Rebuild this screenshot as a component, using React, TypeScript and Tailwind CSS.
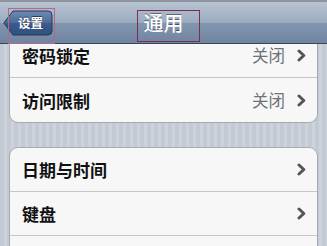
import React from "react";

const font = { fontFamily: '"Noto Sans CJK SC", "Noto Sans", sans-serif' };

function Chevron() {
  return (
    <svg width="9" height="13" viewBox="0 0 9 13" className="shrink-0">
      <path d="M2 2 L6.8 6.5 L2 11" fill="none" stroke="#555557" strokeWidth="3" strokeLinecap="round" strokeLinejoin="round" />
    </svg>
  );
}

function Row({ label, value, last }: { label: string; value?: string; last?: boolean }) {
  return (
    <div className={`flex h-[44px] items-center pl-[12px] pr-[11px] ${last ? "" : "border-b border-[#c4c6ca]"}`}>
      <span className="flex-1 text-[17px] font-bold text-[#111] leading-none">{label}</span>
      {value && <span className="mr-[12px] text-[16.5px] text-[#6f7278] leading-none">{value}</span>}
      <Chevron />
    </div>
  );
}

export default function App() {
  return (
    <div
      className="relative h-[246px] w-[327px] overflow-hidden bg-[repeating-linear-gradient(90deg,#c3cad3_0px,#c3cad3_4px,#cdd3da_4px,#cdd3da_7px)]"
      style={font}
    >
      {/* nav bar */}
      <div className="relative z-10 grid h-[44px] grid-cols-[60px_1fr_60px] items-center border-b border-[#3a4552] border-t-2 border-t-[#8e959e] bg-[linear-gradient(180deg,#b8c3d2_0%,#9babbf_50%,#8396b0_51%,#6f84a2_100%)]">
        <div className="pl-[3px] pt-[1px]">
          <div className="relative h-[26px] w-[50px]">
            <svg width="50" height="26" viewBox="0 0 50 26" className="absolute inset-0">
              <defs>
                <linearGradient id="bb" x1="0" y1="0" x2="0" y2="1">
                  <stop offset="0" stopColor="#6f8bb4" />
                  <stop offset="0.5" stopColor="#4b6a98" />
                  <stop offset="0.51" stopColor="#3b5b8c" />
                  <stop offset="1" stopColor="#2f4f80" />
                </linearGradient>
              </defs>
              <path d="M0.8 13 L10 1 L45 1 Q49 1 49 5 L49 21 Q49 25 45 25 L10 25 Z" fill="url(#bb)" stroke="#2c3a52" strokeWidth="1" />
            </svg>
            <span className="absolute inset-0 flex items-center pl-[15px] text-[12.5px] font-bold text-white leading-none [text-shadow:0_-1px_0_rgba(0,0,0,0.5)]">
              设置
            </span>
          </div>
        </div>
        <div className="flex justify-center">
          <span className="text-[20px] font-medium text-white leading-none [text-shadow:0_-1px_0_rgba(0,0,0,0.45)]">通用</span>
        </div>
        <div />
        {/* annotation boxes */}
        <div className="pointer-events-none absolute left-[8px] top-[6px] h-[36px] w-[47px] border border-[#b8668a]" />
        <div className="pointer-events-none absolute left-[137px] top-[8px] h-[32px] w-[63px] border border-[#7a2f4c]" />
      </div>

      {/* group 1, scrolled under nav bar */}
      <div className="-mt-[10px] mx-[9px] overflow-hidden rounded-b-[9px] border border-t-0 border-[#a7abb1] bg-[#f7f7f7]">
        <Row label="密码锁定" value="关闭" />
        <Row label="访问限制" value="关闭" last />
      </div>

      {/* group 2 */}
      <div className="mt-[24px] mx-[9px] overflow-hidden rounded-t-[9px] border border-b-0 border-[#a7abb1] bg-[#f7f7f7]">
        <Row label="日期与时间" />
        <Row label="键盘" />
        <div className="h-[20px]" />
      </div>
    </div>
  );
}
